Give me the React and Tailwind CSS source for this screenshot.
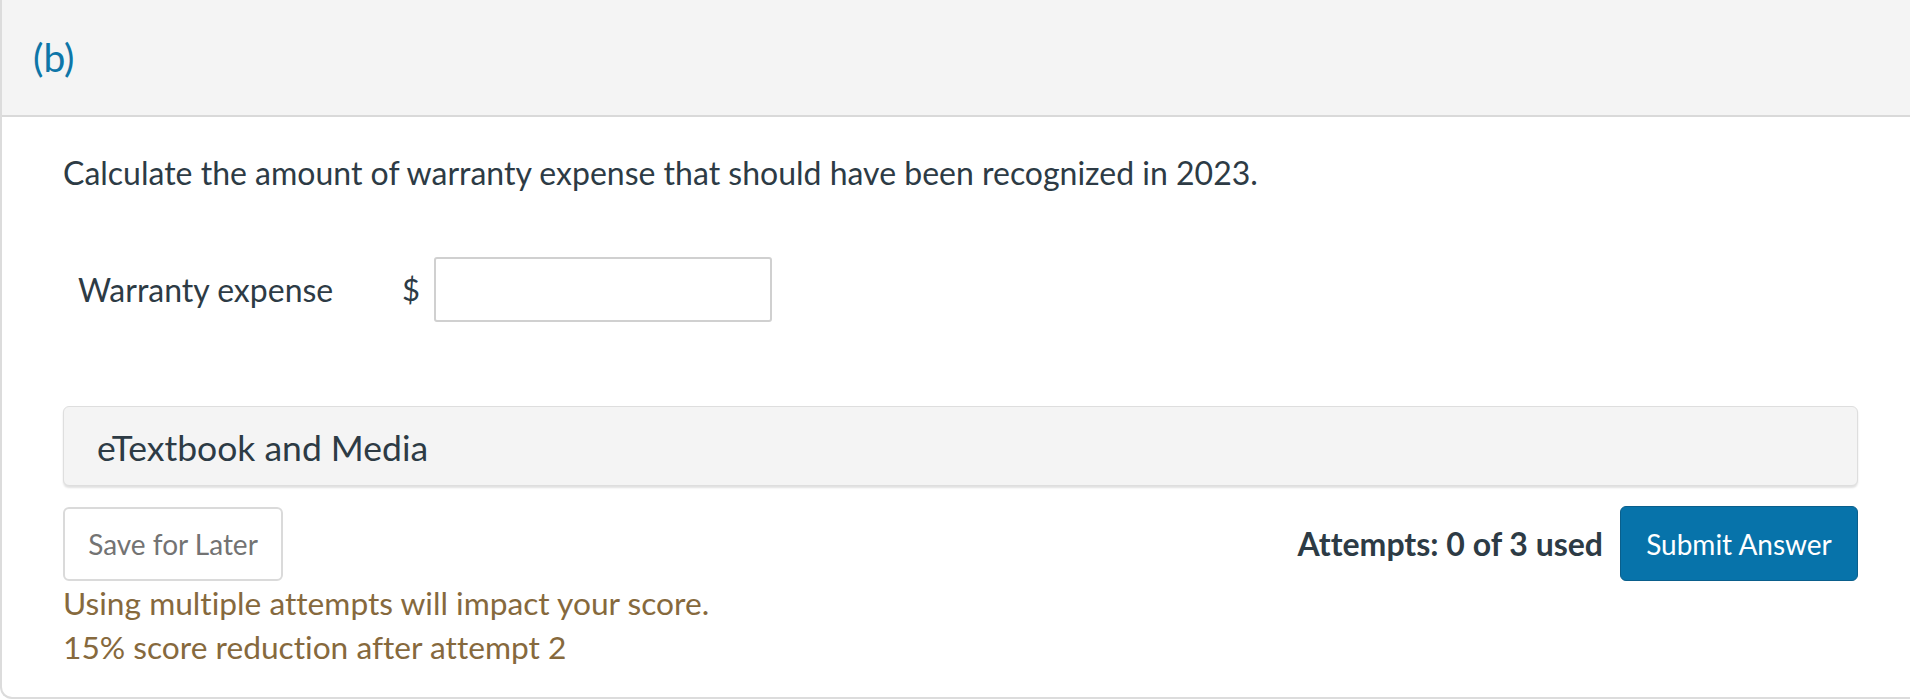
export default function App() {
  return (
    <div className="w-[1910px] h-[700px] bg-white overflow-hidden [font-variant-ligatures:none]" style={{ fontFamily: 'Lato, "Open Sans", sans-serif' }}>
      <div className="h-[699px] border-l-2 border-b-2 border-[#dcdcdc] rounded-bl-xl flex flex-col">
        <div className="h-[117px] shrink-0 bg-[#f4f4f4] border-b-2 border-[#d9d9d9] flex items-center pl-[31px]">
          <span className="text-[39px] text-[#0e76a8]">(b)</span>
        </div>
        <div className="pl-[61px] pr-[52px]">
          <p className="mt-[33px] text-[32px] leading-[45px] text-[#2d3b45]">
            Calculate the amount of warranty expense that should have been recognized in 2023.
          </p>
          <div className="mt-[62px] flex items-center pl-[15px]">
            <span className="w-[324px] text-[32px] text-[#2d3b45]">Warranty expense</span>
            <span className="w-[32px] text-[31px] text-[#2d3b45]">$</span>
            <input type="text" className="w-[338px] h-[65px] border-2 border-[#d0d0d0] rounded-[3px] bg-white outline-none" />
          </div>
          <div className="mt-[84px] h-[80px] bg-[#f4f4f4] border border-[#dedede] rounded-md shadow-[0_2px_2px_rgba(0,0,0,0.12)] flex items-center pl-[33px] pt-[3px]">
            <span className="text-[35.5px] text-[#2d3b45]">eTextbook and Media</span>
          </div>
          <div className="mt-[20px] flex items-center justify-between">
            <button className="w-[220px] h-[74px] border-2 border-[#dadada] rounded-md bg-white text-[28px] text-[#737373]">
              Save for Later
            </button>
            <div className="flex items-center">
              <span className="text-[32px] font-bold text-[#2d3b45] mr-[17px]">Attempts: 0 of 3 used</span>
              <button className="w-[238px] h-[75px] bg-[#0773aa] border border-[#0a5f8c] rounded-md text-[28px] text-white">
                Submit Answer
              </button>
            </div>
          </div>
          <div className="text-[31.7px] leading-[44px] text-[#86693d]">
            <div>Using multiple attempts will impact your score.</div>
            <div>15% score reduction after attempt 2</div>
          </div>
        </div>
      </div>
    </div>
  );
}
